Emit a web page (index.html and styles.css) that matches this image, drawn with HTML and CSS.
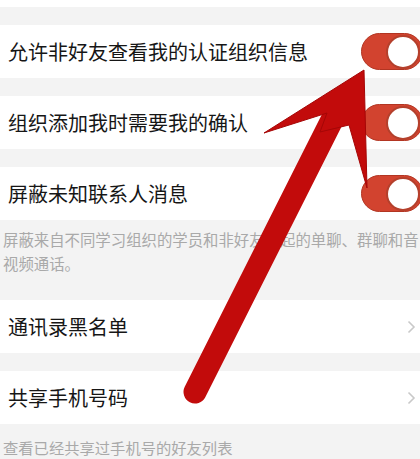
FILE: index.html
```html
<!DOCTYPE html>
<html lang="zh">
<head>
<meta charset="utf-8">
<link rel="stylesheet" href="styles.css">
</head>
<body>
<div class="page">
  <div class="strip"></div>
  <div class="gap"></div>
  <div class="row">
    <span class="label">允许非好友查看我的认证组织信息</span>
    <span class="toggle"><span class="knob"></span></span>
  </div>
  <div class="gap"></div>
  <div class="row">
    <span class="label">组织添加我时需要我的确认</span>
    <span class="toggle"><span class="knob"></span></span>
  </div>
  <div class="gap"></div>
  <div class="row">
    <span class="label">屏蔽未知联系人消息</span>
    <span class="toggle"><span class="knob"></span></span>
  </div>
  <div class="desc">屏蔽来自不同学习组织的学员和非好友发起的单聊、群聊和音视频通话。</div>
  <div class="row">
    <span class="label">通讯录黑名单</span>
    <svg class="chev" width="9" height="14" viewBox="0 0 9 14"><polyline points="1.5,1.5 7,7 1.5,12.5" fill="none" stroke="#c9c9c9" stroke-width="1.6"/></svg>
  </div>
  <div class="gap"></div>
  <div class="row">
    <span class="label">共享手机号码</span>
    <svg class="chev" width="9" height="14" viewBox="0 0 9 14"><polyline points="1.5,1.5 7,7 1.5,12.5" fill="none" stroke="#c9c9c9" stroke-width="1.6"/></svg>
  </div>
  <div class="foot">查看已经共享过手机号的好友列表</div>

  <svg class="arrow" width="420" height="459" viewBox="0 0 420 459">
    <line x1="195" y1="392" x2="336" y2="112" stroke="#c20b0b" stroke-width="23" stroke-linecap="round"/>
    <polygon points="364,70 264,133 327,113 320,132 349,125 367,188" fill="#c20b0b" stroke="#a50606" stroke-width="1" stroke-linejoin="round"/>
  </svg>
</div>
</body>
</html>
```

FILE: styles.css
```css
html, body {
  margin: 0;
  padding: 0;
  overflow: hidden;
  background: #f3f3f3;
}

.page {
  position: relative;
  width: 420px;
  height: 459px;
  overflow: hidden;
  font-family: "Noto Sans CJK SC", "Noto Sans", sans-serif;
}

.strip {
  height: 7px;
  background: #fff;
}

.gap {
  height: 18px;
}

.row {
  height: 53px;
  background: #fff;
  display: flex;
  align-items: center;
  justify-content: space-between;
  padding-left: 8px;
  padding-right: 4px;
}

.label {
  font-size: 20px;
  color: #161616;
  line-height: 1;
}

.toggle {
  flex: none;
  width: 62px;
  height: 37px;
  box-sizing: border-box;
  border-radius: 19px;
  background: #d2432f;
  border: 1px solid #b23522;
  margin-right: -7px;
  display: flex;
  align-items: center;
  padding-left: 24px;
}

.knob {
  width: 34px;
  height: 34px;
  box-sizing: border-box;
  border-radius: 50%;
  background: #fff;
  border: 2px solid #b4402c;
}

.chev {
  flex: none;
}

.desc {
  padding: 8px 0 0 3px;
  height: 72px;
  font-size: 15.4px;
  line-height: 23.5px;
  color: #a9a9a9;
}

.foot {
  padding: 11px 0 0 3px;
  font-size: 15.3px;
  line-height: 24px;
  color: #a9a9a9;
}

.arrow {
  position: absolute;
  left: 0;
  top: 0;
}
```
